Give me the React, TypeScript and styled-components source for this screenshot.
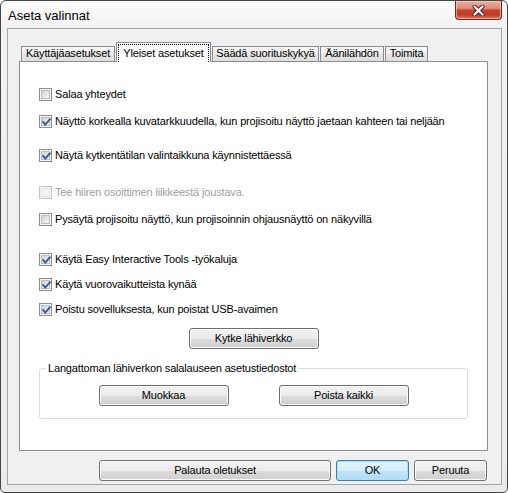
import React from "react";
import styled, { createGlobalStyle } from "styled-components";

const UI_FONT = `"Liberation Sans", Arial, sans-serif`;

const Global = createGlobalStyle`
  html, body { margin: 0; padding: 0; background: #ffffff; }
  body { font-family: ${UI_FONT}; font-size: 11px; letter-spacing: -0.16px; color: #000; }
  * { box-sizing: border-box; }
`;

const Window = styled.div`
  width: 508px;
  height: 493px;
  border: 1px solid #454545;
  border-radius: 6px 6px 5px 5px;
  background: linear-gradient(#fbfbfb, #f1f1f1 30px, #ebebeb);
  display: flex;
  flex-direction: column;
  padding: 0 5px 7px 6px;
  overflow: hidden;
`;

const TitleBar = styled.div`
  height: 27px;
  flex: none;
  display: flex;
  align-items: flex-start;
  justify-content: space-between;
`;

const Title = styled.div`
  margin: 7px 0 0 1px;
  font-family: "Liberation Sans", sans-serif;
  font-size: 13px;
  letter-spacing: 0;
  line-height: 15px;
  color: #000;
`;

const CloseButton = styled.div`
  width: 47px;
  height: 19px;
  border: 1px solid #6b2a22;
  border-top: none;
  border-radius: 0 0 4px 4px;
  background: linear-gradient(#eab0a4 0%, #dc8d7d 40%, #c8432e 52%, #c23c27 75%, #d9785f 100%);
  box-shadow: inset 0 0 0 1px rgba(255, 220, 210, 0.55);
  display: flex;
  align-items: center;
  justify-content: center;
`;

const Client = styled.div`
  flex: 1;
  border: 1px solid #a4a4a4;
  background: #f0f0f0;
  display: flex;
  flex-direction: column;
  padding: 13px 13px 3px 11px;
`;

const TabStrip = styled.div`
  height: 19px;
  flex: none;
  display: flex;
  align-items: flex-end;
  gap: 1px;
  padding-left: 2px;
  position: relative;
  z-index: 1;
`;

const Tab = styled.div<{ $w: number; $active?: boolean }>`
  width: ${(p) => p.$w}px;
  height: ${(p) => (p.$active ? 20 : 15)}px;
  margin-bottom: ${(p) => (p.$active ? -1 : 0)}px;
  border: 1px solid #898c95;
  border-bottom: none;
  background: ${(p) =>
    p.$active
      ? "#ffffff"
      : "linear-gradient(#f7f7f7, #efefef 50%, #e5e5e5 50%, #dedede)"};
  display: flex;
  align-items: center;
  justify-content: center;
  padding: ${(p) => (p.$active ? "1px 1px 0 1px" : "0 0 1px 0")};
  white-space: nowrap;
  line-height: 13px;
`;

const FocusRect = styled.span`
  flex: 1;
  align-self: stretch;
  border: 1px dotted #000;
  border-bottom: none;
  display: flex;
  align-items: center;
  justify-content: center;
  padding-bottom: 1px;
`;

const Panel = styled.div`
  height: 390px;
  flex: none;
  border: 1px solid #898c95;
  background: #ffffff;
  display: flex;
  flex-direction: column;
  padding: 26px 0 0 19px;
`;

const Row = styled.label<{ $top: number; $disabled?: boolean }>`
  display: flex;
  align-items: center;
  gap: 3px;
  height: 13px;
  margin-top: ${(p) => p.$top}px;
  line-height: 13px;
  white-space: nowrap;
  color: ${(p) => (p.$disabled ? "#a0a0a0" : "#000")};
`;

const Box = styled.span<{ $disabled?: boolean }>`
  position: relative;
  flex: none;
  width: 13px;
  height: 13px;
  border: 1px solid ${(p) => (p.$disabled ? "#c4c4c4" : "#8e8f8f")};
  background: #f6f6f6;
  padding: 1px;
  display: flex;
`;

const BoxFill = styled.span<{ $disabled?: boolean }>`
  flex: 1;
  border: 1px solid ${(p) => (p.$disabled ? "#e2e2e2" : "#b9bcc0")};
  background: ${(p) =>
    p.$disabled
      ? "#f4f4f4"
      : "linear-gradient(135deg, #cdd0d4 0%, #e4e5e7 50%, #f7f7f7 100%)"};
`;

const CheckMark = styled.svg`
  position: absolute;
  left: 0;
  top: 0;
`;

const Button = styled.button<{ $w: number; $default?: boolean }>`
  width: ${(p) => p.$w}px;
  height: 21px;
  flex: none;
  padding: 0;
  margin: 0;
  font-family: ${UI_FONT};
  font-size: 11px;
  letter-spacing: -0.16px;
  line-height: 13px;
  color: #000;
  border: 1px solid ${(p) => (p.$default ? "#3c7fb1" : "#707070")};
  border-radius: 3px;
  background: ${(p) =>
    p.$default
      ? "linear-gradient(#e5f4fc 0%, #d7eefb 50%, #bfe5fa 50%, #b0dcf5 100%)"
      : "linear-gradient(#f2f2f2 0%, #ebebeb 50%, #dddddd 50%, #cfcfcf 100%)"};
  box-shadow: inset 0 0 0 1px ${(p) => (p.$default ? "#a9e0f7" : "#fcfcfc")};
`;

const CenterButton = styled.div`
  display: flex;
  justify-content: center;
  margin-top: 12px;
  padding-right: 19px;
`;

const Group = styled.fieldset`
  margin: 12px 0 0 0;
  width: 429px;
  border: 1px solid #d5dfe5;
  border-radius: 3px;
  padding: 0 0 12px 0;
  min-width: 0;
`;

const Legend = styled.legend`
  margin-left: 6px;
  padding: 0 2px;
  line-height: 14px;
  font-size: 11px;
`;

const GroupButtons = styled.div`
  display: flex;
  justify-content: center;
  gap: 50px;
  margin-top: 10px;
`;

const Footer = styled.div`
  display: flex;
  justify-content: flex-end;
  gap: 5px;
  margin-top: 9px;
  padding-right: 1px;
`;

function Checkbox({
  top,
  checked,
  disabled,
  children,
}: {
  top: number;
  checked?: boolean;
  disabled?: boolean;
  children: React.ReactNode;
}) {
  return (
    <Row $top={top} $disabled={disabled}>
      <Box $disabled={disabled}>
        <BoxFill $disabled={disabled} />
        {checked && (
          <CheckMark width="13" height="13" viewBox="0 0 13 13">
            <path
              d="M3.2 6.2 L5.3 8.6 L9.8 3.4"
              fill="none"
              stroke="#40599a"
              strokeWidth="2"
              strokeLinecap="square"
              strokeLinejoin="miter"
            />
          </CheckMark>
        )}
      </Box>
      <span>{children}</span>
    </Row>
  );
}

export default function App() {
  return (
    <>
      <Global />
      <Window>
        <TitleBar>
          <Title>Aseta valinnat</Title>
          <CloseButton>
            <svg width="13" height="11" viewBox="0 0 13 11">
              <path d="M2.5 1.5 L10.5 9.5 M10.5 1.5 L2.5 9.5" stroke="#4a1e18" strokeWidth="4" strokeLinecap="round" />
              <path d="M2.5 1.5 L10.5 9.5 M10.5 1.5 L2.5 9.5" stroke="#ffffff" strokeWidth="2.2" strokeLinecap="round" />
            </svg>
          </CloseButton>
        </TitleBar>
        <Client>
          <TabStrip>
            <Tab $w={94}>Käyttäjäasetukset</Tab>
            <Tab $w={95} $active>
              <FocusRect>Yleiset asetukset</FocusRect>
            </Tab>
            <Tab $w={107}>Säädä suorituskykyä</Tab>
            <Tab $w={64}>Äänilähdön</Tab>
            <Tab $w={43}>Toimita</Tab>
          </TabStrip>
          <Panel>
            <Checkbox top={0}>Salaa yhteydet</Checkbox>
            <Checkbox top={14} checked>
              Näyttö korkealla kuvatarkkuudella, kun projisoitu näyttö jaetaan kahteen tai neljään
            </Checkbox>
            <Checkbox top={21} checked>
              Näytä kytkentätilan valintaikkuna käynnistettäessä
            </Checkbox>
            <Checkbox top={24} disabled>
              Tee hiiren osoittimen liikkeestä joustava.
            </Checkbox>
            <Checkbox top={14}>
              Pysäytä projisoitu näyttö, kun projisoinnin ohjausnäyttö on näkyvillä
            </Checkbox>
            <Checkbox top={27} checked>
              Käytä Easy Interactive Tools -työkaluja
            </Checkbox>
            <Checkbox top={12} checked>
              Käytä vuorovaikutteista kynää
            </Checkbox>
            <Checkbox top={12} checked>
              Poistu sovelluksesta, kun poistat USB-avaimen
            </Checkbox>
            <CenterButton>
              <Button $w={130}>Kytke lähiverkko</Button>
            </CenterButton>
            <Group>
              <Legend>Langattoman lähiverkon salalauseen asetustiedostot</Legend>
              <GroupButtons>
                <Button $w={130}>Muokkaa</Button>
                <Button $w={130}>Poista kaikki</Button>
              </GroupButtons>
            </Group>
          </Panel>
          <Footer>
            <Button $w={232}>Palauta oletukset</Button>
            <Button $w={73} $default>
              OK
            </Button>
            <Button $w={73}>Peruuta</Button>
          </Footer>
        </Client>
      </Window>
    </>
  );
}
